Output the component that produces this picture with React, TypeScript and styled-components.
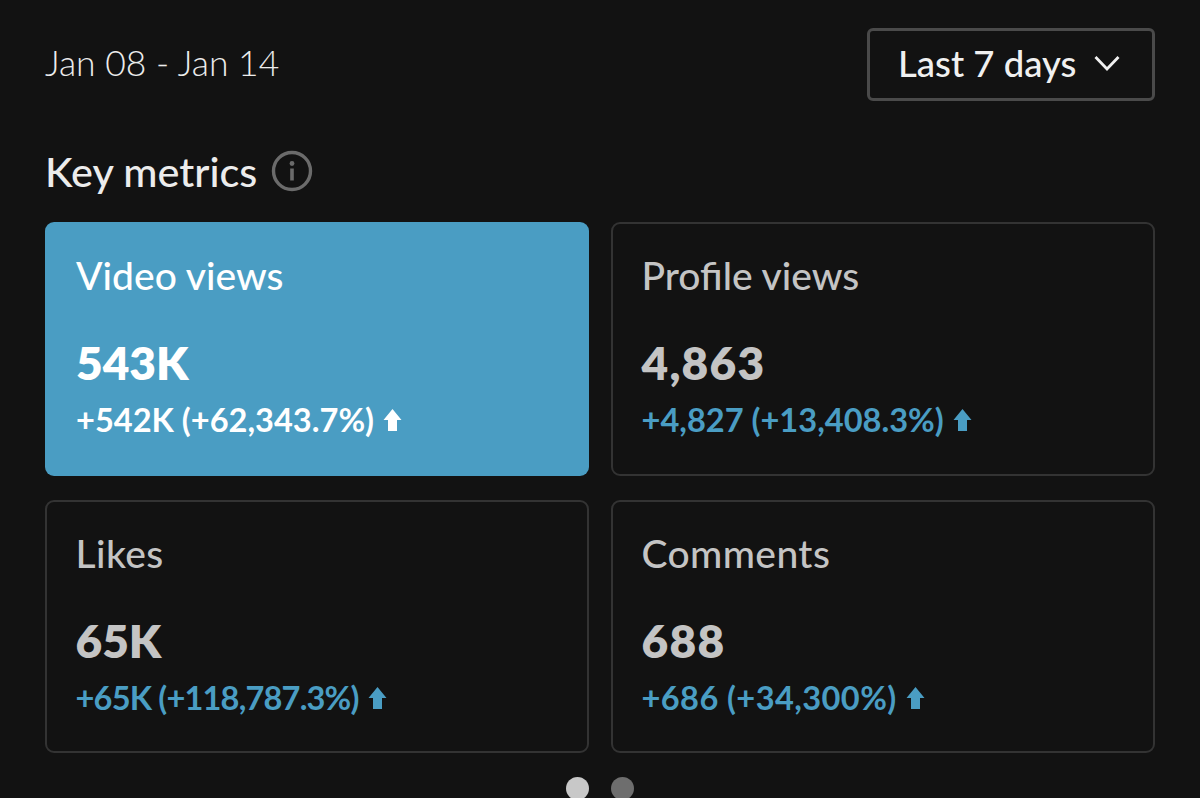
import React from 'react';
import styled, { createGlobalStyle } from 'styled-components';

const Global = createGlobalStyle`
  html, body {
    margin: 0;
    height: 798px;
    overflow: hidden;
    background: #121212;
  }
`;

const Page = styled.div`
  box-sizing: border-box;
  height: 798px;
  overflow: hidden;
  padding: 28px 45px 0;
  background: #121212;
  font-family: Lato, "Open Sans", sans-serif;
`;

const TopBar = styled.div`
  display: flex;
  align-items: center;
  justify-content: space-between;
`;

const DateRange = styled.span`
  margin-bottom: 4px;
  font-size: 35.5px;
  line-height: 66px;
  font-weight: 300;
  color: #ececec;
`;

const RangeButton = styled.button`
  box-sizing: border-box;
  width: 288px;
  height: 73px;
  display: flex;
  align-items: center;
  gap: 18px;
  padding: 0 0 4px 28px;
  background: transparent;
  border: 3px solid #4a4a4a;
  border-radius: 6px;
  color: #f0f0f0;
  font-family: inherit;
  font-size: 36.5px;
  font-weight: 500;
`;

const Heading = styled.h2`
  display: flex;
  align-items: center;
  gap: 14px;
  height: 48px;
  margin: 46px 0 27px;
  font-size: 41.4px;
  font-weight: 500;
  color: #ececec;
`;

const Grid = styled.div`
  display: grid;
  grid-template-columns: 544px 544px;
  grid-template-rows: 254px 253px;
  column-gap: 22px;
  row-gap: 24px;
`;

const Card = styled.div<{ $active?: boolean }>`
  box-sizing: border-box;
  padding: ${p => (p.$active ? '30px' : '27.5px')} 30px 0 ${p => (p.$active ? '31px' : '28.5px')};
  border-radius: 9px;
  border: ${p => (p.$active ? 'none' : '2.5px solid #333333')};
  background: ${p => (p.$active ? '#4a9dc3' : 'transparent')};
`;

const Label = styled.div<{ $active?: boolean; $track?: number }>`
  font-size: 39px;
  line-height: 46px;
  font-weight: 500;
  letter-spacing: ${p => p.$track ?? 0}px;
  color: ${p => (p.$active ? '#ffffff' : '#c4c4c4')};
`;

const Value = styled.div<{ $active?: boolean; $track?: number }>`
  margin-top: 38px;
  font-size: 46px;
  line-height: 54px;
  font-weight: 800;
  letter-spacing: ${p => p.$track ?? 0}px;
  color: ${p => (p.$active ? '#ffffff' : '#c4c4c4')};
`;

const Delta = styled.div<{ $active?: boolean; $track?: number }>`
  display: flex;
  align-items: center;
  gap: 9px;
  margin-top: 11px;
  font-size: 32.6px;
  line-height: 38px;
  font-weight: 700;
  letter-spacing: ${p => p.$track ?? 0}px;
  color: ${p => (p.$active ? '#ffffff' : '#4a9dc3')};
`;

const Dots = styled.div`
  display: flex;
  justify-content: center;
  gap: 22px;
  margin-top: 24px;
`;

const Dot = styled.span<{ $on?: boolean }>`
  width: 23px;
  height: 23px;
  border-radius: 50%;
  background: ${p => (p.$on ? '#c8c8c8' : '#6e6e6e')};
`;

const InfoIcon = () => (
  <svg width="42" height="42" viewBox="0 0 42 42" fill="none">
    <circle cx="21" cy="21" r="18.5" stroke="#6b6b6b" strokeWidth="3.4" />
    <circle cx="21" cy="13.5" r="2.4" fill="#6b6b6b" />
    <rect x="19.2" y="18.5" width="3.6" height="12" fill="#6b6b6b" />
  </svg>
);

const Chevron = () => (
  <svg width="26" height="16" viewBox="0 0 26 16" fill="none">
    <path d="M1.5 2 L13 14 L24.5 2" stroke="#f0f0f0" strokeWidth="2.8" />
  </svg>
);

const ArrowUp = ({ color }: { color: string }) => (
  <svg width="19" height="24" viewBox="0 0 19 24">
    <path d="M9.5 1 L18.5 12 H14 V23 H5 V12 H0.5 Z" fill={color} />
  </svg>
);

const metrics = [
  { label: 'Video views', value: '543K', delta: '+542K (+62,343.7%)', active: true },
  { label: 'Profile views', value: '4,863', delta: '+4,827 (+13,408.3%)', valueTrack: 1.2 },
  { label: 'Likes', value: '65K', delta: '+65K (+118,787.3%)', labelTrack: 0.4, deltaTrack: -0.83 },
  { label: 'Comments', value: '688', delta: '+686 (+34,300%)', labelTrack: 0.4, valueTrack: 1.3, deltaTrack: 0.4 },
];

export default function App() {
  return (
    <Page>
      <Global />
      <TopBar>
        <DateRange>Jan 08 - Jan 14</DateRange>
        <RangeButton>
          Last 7 days
          <Chevron />
        </RangeButton>
      </TopBar>
      <Heading>
        Key metrics
        <InfoIcon />
      </Heading>
      <Grid>
        {metrics.map(m => (
          <Card key={m.label} $active={m.active}>
            <Label $active={m.active} $track={m.labelTrack}>{m.label}</Label>
            <Value $active={m.active} $track={m.valueTrack}>{m.value}</Value>
            <Delta $active={m.active} $track={m.deltaTrack}>
              {m.delta}
              <ArrowUp color={m.active ? '#ffffff' : '#4a9dc3'} />
            </Delta>
          </Card>
        ))}
      </Grid>
      <Dots>
        <Dot $on />
        <Dot />
      </Dots>
    </Page>
  );
}
